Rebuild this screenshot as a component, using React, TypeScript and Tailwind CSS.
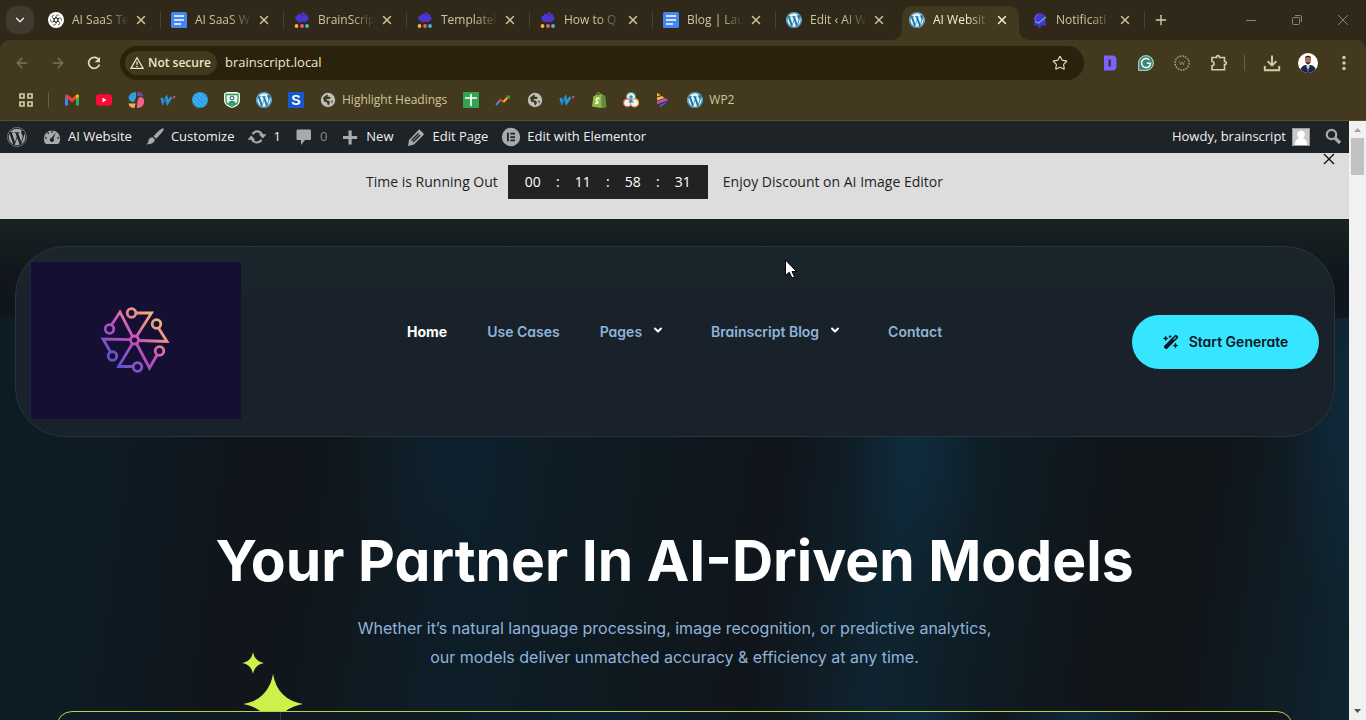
import type { ReactNode } from "react";
import { FaWordpress } from "react-icons/fa";
import { FaWandMagicSparkles } from "react-icons/fa6";
import { ArrowLeft, ArrowRight, ChevronDown, Plus, X, Star } from "lucide-react";

const OpenAi = () => (
  <svg viewBox="0 0 16 16" className="size-4">
    <circle cx="8" cy="8" r="8" fill="#fff" />
    <g fill="none" stroke="#333" strokeWidth=".8">
      {[0, 60, 120, 180, 240, 300].map((a) => (
        <path key={a} d="M8 5.800V4.200a1.800 1.800 0 0 1 3.200-.5M8 5.800l2 1.100v3" transform={`rotate(${a} 8 8)`} />
      ))}
    </g>
  </svg>
);

const Docs = () => (
  <svg viewBox="0 0 16 16" className="size-4">
    <rect width="16" height="16" rx="1.5" fill="#4285f4" />
    <path d="M3 4h10M3 8h10M3 12h7" stroke="#fff" strokeWidth="1.7" />
  </svg>
);

const Brain = () => (
  <svg viewBox="0 0 16 16" className="size-4">
    <path d="M1.5 7C.6 4.5 2.3 3.4 3.8 3.500 4 1.500 6 .8 7 2 8-.3 11-.3 11.200 2c2 .2 2.500 1.700 2.300 2.500 1.700.8 1.500 3.500-.5 4-1 2-3.500 1.700-4.500 1C6 11 3 10.500 3 8.500c-.8 0-1.300-.7-1.500-1.500z" fill="#4a35cf" />
    <path d="M7 2l1 1.500M11 2 9.500 3.500" stroke="#302818" strokeWidth=".8" />
    <circle cx="2.500" cy="14" r="1.900" fill="#f5b041" />
    <circle cx="8" cy="14" r="1.900" fill="#e8626e" />
    <circle cx="13" cy="14" r="1.900" fill="#4db4ea" />
  </svg>
);

const Wp = () => (
  <span className="flex size-4 rounded-full bg-[#1878a8]">
    <FaWordpress className="size-4 text-[#e4f0f6]" />
  </span>
);

const Bell = () => (
  <svg viewBox="0 0 16 16" className="size-4">
    <path d="M2.500 12V6.500a5.500 5.500 0 0 1 11 0V12l1 1.500h-13z" fill="#4f31d6" />
    <path d="M3.500 8.500a4 4 0 0 1 3-6" stroke="#7d69ee" fill="none" />
    <path d="M3 9.500 6.500 11 14 5" stroke="#35d1a4" fill="none" strokeWidth="1.200" />
    <circle cx="7.500" cy="14.500" r="1.500" fill="#4f31d6" />
  </svg>
);

type Tab = { title: string; icon: () => ReactNode; active?: boolean; bare?: boolean };
const tabs: Tab[] = [
  { title: "AI SaaS Te", icon: OpenAi },
  { title: "AI SaaS W", icon: Docs },
  { title: "BrainScrip", icon: Brain },
  { title: "Templatel", icon: Brain },
  { title: "How to Q", icon: Brain },
  { title: "Blog | Lau", icon: Docs },
  { title: "Edit ‹ AI W", icon: Wp, bare: true },
  { title: "AI Websit", icon: Wp, active: true },
  { title: "Notificati", icon: Bell },
];

function TabStrip() {
  return (
    <div className="flex h-10 items-end bg-[#302818]">
      <button aria-label="Search tabs" className="mr-1 mb-1.5 ml-1.5 flex size-7 shrink-0 items-center justify-center rounded-[10px] bg-[#423a2f] text-[#f0e8d8]">
        <ChevronDown className="size-3.5" strokeWidth={2.5} />
      </button>
      <div role="tablist" className="flex h-[34px] min-w-0">
        {tabs.map((t, i) => (
          <div key={i} className="relative flex w-[123px] min-w-0 px-[3px]">
            <div
              className={
                t.active
                  ? "flex w-full items-start rounded-t-[10px] bg-[#43391f] pt-1.5 pl-[7px] text-[#f3ecd6]"
                  : "flex w-full items-start pt-1.5 pl-[7px] text-[#cfc59c]"
              }
            >
              <span className="shrink-0">{t.icon()}</span>
              <span role="tab" aria-selected={!!t.active} className="ml-2 h-4 w-[62px] shrink-0 [mask-image:linear-gradient(to_right,black_55%,transparent_92%)] text-[12px] leading-4 whitespace-nowrap">
                {t.title}
              </span>
              <button aria-label={`Close ${t.title}`} className="flex h-4 shrink-0 items-center">
                <X className="size-3.5" strokeWidth={2.5} />
              </button>
            </div>
            {!t.active && !t.bare && <span className="absolute top-1.5 right-0 h-4 w-px bg-[#4a4335]" />}
            {t.active && (
              <>
                <svg viewBox="0 0 10 10" className="absolute bottom-0 -left-[7px] size-2.5"><path d="M10 0v10H0A10 10 0 0 0 10 0z" fill="#43391f" /></svg>
                <svg viewBox="0 0 10 10" className="absolute -right-[7px] bottom-0 size-2.5"><path d="M0 0v10h10A10 10 0 0 1 0 0z" fill="#43391f" /></svg>
              </>
            )}
          </div>
        ))}
      </div>
      <button aria-label="New tab" className="mb-3 ml-2 text-[#d8cfb0]">
        <Plus className="size-4" />
      </button>
      <div className="mb-3 ml-auto flex items-center gap-[30px] pr-[15px] text-[#8b846f]">
        <button aria-label="Minimize" className="flex size-4 items-center justify-center"><span className="h-px w-2.5 bg-current" /></button>
        <button aria-label="Restore" className="flex size-4 items-center justify-center">
          <svg viewBox="0 0 12 12" className="size-3" fill="none" stroke="currentColor"><rect x="1.500" y="3.500" width="7" height="7" rx="1" /><path d="M4 1.500h5A1.500 1.500 0 0 1 10.500 3v5" /></svg>
        </button>
        <button aria-label="Close window" className="flex size-4 items-center justify-center">
          <svg viewBox="0 0 12 12" className="size-3" stroke="currentColor"><path d="m1 1 10 10M11 1 1 11" /></svg>
        </button>
      </div>
    </div>
  );
}

function Toolbar() {
  return (
    <div className="flex h-[46px] items-center rounded-t-[10px] bg-[#43391f] pl-[14px]">
      <button aria-label="Back" className="text-[#807555]"><ArrowLeft className="size-4" /></button>
      <button aria-label="Forward" className="ml-5 text-[#807555]"><ArrowRight className="size-4" /></button>
      <button aria-label="Reload" className="ml-5 text-[#e2dabb]">
        <svg viewBox="0 0 16 16" className="size-4"><path d="M13 5.200A5.500 5.500 0 1 0 13.400 9.500" fill="none" stroke="currentColor" strokeWidth="1.700" /><path d="M14 2v5.300H8.700z" fill="currentColor" /></svg>
      </button>
      <div className="ml-[18px] flex h-[34px] min-w-0 flex-1 items-center rounded-full bg-[#2a220c] pr-4 pl-[5px]">
        <span className="flex h-6 shrink-0 items-center rounded-full bg-[#43391f] pr-1.5 pl-[5px] text-[12px] font-semibold text-[#efe7cd]">
          <svg viewBox="0 0 14 14" className="mr-1 size-3.5" fill="none" stroke="currentColor" strokeWidth="1.300"><path d="M7 1.800 13 12.300H1z" /><path d="M7 5.500v3.200M7 9.800v1.300" /></svg>
          Not secure
        </span>
        <input aria-label="Address" defaultValue="brainscript.local" className="ml-2 min-w-0 flex-1 bg-transparent text-[13px] text-[#efe7cd] outline-none" />
        <button aria-label="Bookmark this page" className="text-[#e2dabb]"><Star className="size-4" strokeWidth={1.700} /></button>
      </div>
      <div className="flex items-center pr-[14px] pl-[18px] text-[#d6cca4]">
        <svg viewBox="0 0 16 16" className="size-4"><path d="M2 .5h8q4.500 0 4.500 4.500v6q0 4.500-4.500 4.500H2zM6.500 4.500v7H9v-7z" fill="#7b61ff" fillRule="evenodd" /></svg>
        <svg viewBox="0 0 16 16" className="ml-5 size-4"><path d="M8 0a8 8 0 1 1 0 16H0V8a8 8 0 0 1 8-8z" fill="#3c8371" /><path d="M8 .7a7.300 7.300 0 1 1 0 14.600H.7V8A7.300 7.300 0 0 1 8 .7z" fill="none" stroke="#cfe0d8" strokeWidth=".9" /><path d="M11.300 5A4.500 4.500 0 1 0 12.500 8.300H8.800" stroke="#fff" strokeWidth="1.500" fill="none" /></svg>
        <svg viewBox="0 0 16 16" className="ml-5 size-4"><circle cx="8" cy="8" r="7" fill="none" stroke="#a9a596" strokeWidth="1.500" strokeDasharray="1.600 1.150" /><path d="M10.500 1.500A7 7 0 0 1 15 8" stroke="#5f9134" strokeWidth="1.500" strokeDasharray="1.600 1.150" fill="none" /><path d="m5.500 6 1.200 4L8 7l1.300 3 1.200-4" stroke="#7f7a68" fill="none" /></svg>
        <svg viewBox="0 0 18 18" className="ml-5 size-[18px]" fill="none" stroke="currentColor" strokeWidth="1.600"><path d="M2 3.500h4.500C6 1 10 1 9.500 3.500h5v4c2.500-.5 2.500 3.500 0 3v5.200H2v-4C4.800 11.700 4.800 7.500 2 7.500z" /></svg>
        <span className="ml-4 h-4 w-px bg-[#6a6039]" />
        <svg viewBox="0 0 18 18" className="ml-[18px] size-[18px]" fill="none" stroke="currentColor" strokeWidth="1.900"><path d="M9 1.500v10M4.700 7.300 9 11.500l4.300-4.200M1.800 12v4.200h14.400V12" /></svg>
        <svg viewBox="0 0 20 20" className="ml-[17px] size-5"><defs><clipPath id="face"><circle cx="10" cy="10" r="10" /></clipPath></defs><g clipPath="url(#face)"><path d="M0 0h20v20H0z" fill="#fff" /><path d="M2 20c0-6 3-7.500 5.500-8h5c3 .5 5.500 2 5.500 8z" fill="#1b2746" /><path d="M8.500 10h3v4L10 17l-1.500-3z" fill="#e9e3e0" /><ellipse cx="10" cy="7" rx="3" ry="4.300" fill="#a9705a" /><path d="M7 6C6 1.500 14 1.500 13 6c-.5-1.500-1.500-2-3-2S7.500 4.500 7 6zM7.700 9.500h4.600L10 11.500z" fill="#251a1b" /><path d="m10 12.500.8 6H9.200z" fill="#3d75c4" /></g></svg>
        <svg viewBox="0 0 16 16" className="ml-[18px] size-4" fill="currentColor"><circle cx="8" cy="2.500" r="1.700" /><circle cx="8" cy="8" r="1.700" /><circle cx="8" cy="13.500" r="1.700" /></svg>
      </div>
    </div>
  );
}

const Globe = () => (
  <svg viewBox="0 0 16 16" className="size-4"><circle cx="8" cy="8" r="7.200" fill="#bfc0bd" /><path d="M3 5.500c2-1 2.500-2.500 5-3l-.5 2 3 .5-.5 2H7l-.5 1.500H9l1 2.500-2 3-1-3.500-3-1zM11 8.500l2 .5-1 2.500z" fill="#43391f" /></svg>
);
const Wave = () => (
  <svg viewBox="0 0 16 16" className="size-4" fill="none"><path d="m1.500 6 1.500 5L6.500 5.500l1 5.500L11.500 5" stroke="#2996d6" strokeWidth="2.400" /><path d="m3.500 12 2-5" stroke="#175f9c" strokeWidth="1.500" /><path d="M13 4h2.500L14 7.500z" fill="#e6457f" /></svg>
);

const bookmarks: { name: string; label?: string; icon: ReactNode }[] = [
  { name: "Gmail", icon: <svg viewBox="0 0 16 16" className="size-4"><path d="M1 4v9.500h3V7z" fill="#4285f4" /><path d="M15 4v9.500h-3V7z" fill="#34a853" /><path d="M1 4.500C1 2 3 2 4 3l4 3 4-3v4l-4 3.500-4-3.500z" fill="#ea4335" /><path d="M12 3c1.500-1 3-.5 3 1.500L12 7z" fill="#fbbc04" /></svg> },
  { name: "YouTube", icon: <svg viewBox="0 0 16 16" className="size-4"><rect y="2.300" width="16" height="11.500" rx="2.800" fill="#fb0a36" /><path d="m6.500 5.700 4 2.400-4 2.400z" fill="#fff" /></svg> },
  { name: "Design", icon: <svg viewBox="0 0 16 16" className="size-4"><path d="M8 0v5.500L6 10C-1.500 10.500-1.500.5 8 0z" fill="#2f9fdd" /><path d="M9 0c4-.5 6 2 6.500 4.500L9 4z" fill="#6a4b9c" /><path d="M12 5c3.500 0 5 3 4 6s-3 5-7 5c0-5 0-9 3-11z" fill="#ef6488" /><path d="M.5 11.500H7.500L6.500 16C3 16 1 14.500.5 11.500z" fill="#f4ad55" /></svg> },
  { name: "Wave", icon: <Wave /> },
  { name: "Sphere", icon: <svg viewBox="0 0 16 16" className="size-4"><circle cx="8" cy="8" r="8" fill="#2aa1e4" /><path d="m2 5 9 9M4 3l10 9M7 1.500l8 7M1.500 8l6 6.500" stroke="#72c4f0" strokeWidth=".7" /></svg> },
  { name: "Shield", icon: <svg viewBox="0 0 16 16" className="size-4"><path d="M0 1.500 3 0h10l3 1.500v7c0 4-4 6.500-8 7.500-4-1-8-3.500-8-7.500z" fill="#eef4ee" /><path d="M2 2.500h12v6c0 3-3 4.700-6 5.700-3-1-6-2.700-6-5.700z" fill="none" stroke="#2a9d55" strokeWidth="1.300" /><circle cx="8" cy="6" r="1.900" fill="none" stroke="#225a70" /><path d="M3.500 12 6 9h4l2.500 3L8 14.500z" fill="#2a9d75" /></svg> },
  { name: "WordPress", icon: <Wp /> },
  { name: "S", icon: <span className="flex size-4 items-center justify-center bg-[#1758d0] font-['Liberation_Sans',sans-serif] text-[14px] leading-4 font-bold text-white">S</span> },
  { name: "Highlight", label: "Highlight Headings", icon: <Globe /> },
  { name: "Sheets", icon: <svg viewBox="0 0 16 16" className="size-4"><rect width="16" height="16" rx="1.300" fill="#35a354" /><path d="M8 2v12M2 6h12" stroke="#fff" strokeWidth="1.700" /></svg> },
  { name: "Analytics", icon: <svg viewBox="0 0 16 16" className="size-4" fill="none" strokeWidth="2"><path d="m1 13 3.500-4" stroke="#4285f4" /><path d="M4 9.500 5.500 8 9 10" stroke="#ea4335" /><path d="m8.500 10 4-4.500" stroke="#fbae17" /><path d="M11 3.500h4V7z" fill="#34a853" /></svg> },
  { name: "Globe", icon: <Globe /> },
  { name: "Wave two", icon: <Wave /> },
  { name: "Shopify", icon: <svg viewBox="0 0 16 16" className="size-4"><path d="m2.500 4 8-2 3.500 2 1.300 11-5.300 1-9-1.500z" fill="#8dbc42" /><path d="m10.500 2 3.500 2 1.300 11-5 1z" fill="#5e8e3e" /><path d="M5 5c0-5 4-6 4.500-2" stroke="#8dbc42" fill="none" /><path d="M8.500 6.700C5 5.500 4.500 8 6 9s1.500 3-2 2" stroke="#fff" strokeWidth="1.500" fill="none" /></svg> },
  { name: "Community", icon: <svg viewBox="0 0 16 16" className="size-4" fill="#f5f3f0" strokeWidth="1.300"><circle cx="8" cy="5" r="4.500" stroke="#48a77d" /><circle cx="4.500" cy="10.800" r="4" stroke="#df5659" /><circle cx="11.500" cy="10.800" r="4" stroke="#e6ab4c" /><circle cx="8" cy="5" r="1.800" fill="#2c8dce" /><path d="m8 6.500 2.800 4H5.200z" fill="#2c8dce" /></svg> },
  { name: "Stripes", icon: <svg viewBox="0 0 16 16" className="size-4"><path d="M2 1v3.500L6 3zM2 5.500v3L9.500 6 7 4z" fill="#f5b93f" /><path d="M2 9.500v2.800L13 8l-2.500-1.700z" fill="#c053cf" /><path d="M5 13v2.500L13.500 9z" fill="#4d63e6" /></svg> },
  { name: "WP2", label: "WP2", icon: <Wp /> },
];

function Bookmarks() {
  return (
    <nav aria-label="Bookmarks" className="flex h-[35px] items-center gap-4 overflow-hidden border-b border-[#5a4e2c] bg-[#43391f] pb-[7px] pl-[18px] text-[12px] text-[#cfc59c]">
      <button aria-label="Apps" className="shrink-0">
        <svg viewBox="0 0 16 16" className="size-4" fill="none" stroke="#d6cca4" strokeWidth="1.700"><path d="M2 2h4v4H2zM10 2h4v4h-4zM2 10h4v4H2zM10 10h4v4h-4z" /></svg>
      </button>
      <span className="-mr-px -ml-0.5 h-4 w-px bg-[#6a6039]" />
      {bookmarks.map((b) => (
        <a key={b.name} href="#" aria-label={b.name} className="flex shrink-0 items-center gap-1.5">
          {b.icon}
          {b.label && <span className="leading-4">{b.label}</span>}
        </a>
      ))}
    </nav>
  );
}

const Dash = ({ children }: { children: ReactNode }) => (
  <svg viewBox="0 0 20 20" className="size-5 text-[#a7aaad]" fill="currentColor">{children}</svg>
);

function AdminBar() {
  const items: { label: string; icon: ReactNode; dim?: boolean }[] = [
    { label: "AI Website", icon: <Dash><path fillRule="evenodd" d="M3.800 17h12.400A8.200 8.200 0 1 0 3.800 17zM9.300 3.800h1.400v2H9.300zM5 6l1-1 1.300 1.300-1 1zM2.800 10.200h2v1.400h-2zM15.200 10.200h2v1.400h-2zM13.800 5.500l-2.300 6.300a2 2 0 1 1-2-.8z" /></Dash> },
    { label: "Customize", icon: <Dash><path d="M18.500 1.500c1 1-1.500 4.500-7.500 10.200l-2.500-2.400C14 3.500 17.500.5 18.500 1.500zM7.500 10.200l2.400 2.400c-.5 3.500-4 5-8.900 4.900 2-1 2-2.300 2.500-4.300.6-2 2-3 4-3z" /></Dash> },
    { label: "1", icon: <Dash><path d="M10 3.300c2.700 0 5 1.600 6 3.900h3.500l-3.700 4.300-4-4.300h1.800A4.200 4.200 0 0 0 6.500 8L4.700 6.200A6.700 6.700 0 0 1 10 3.300zM4.200 8.500l4 4.300H6.400a4.200 4.200 0 0 0 7.100-.8l1.800 1.800A6.700 6.700 0 0 1 4 12.800H.5z" /></Dash> },
    { label: "0", dim: true, icon: <Dash><path d="M4 2.500h11.500c1 0 1.500.5 1.500 1.500v7.500c0 1-.5 1.500-1.500 1.500H11l-4 5v-5H4c-1 0-1.500-.5-1.500-1.500V4c0-1 .5-1.500 1.500-1.500z" /></Dash> },
    { label: "New", icon: <Dash><path d="M8.500 3.500h3.200V9h5.500v3h-5.500v5.500H8.500V12H3V9h5.500z" /></Dash> },
    { label: "Edit Page", icon: <Dash><path fillRule="evenodd" d="m13.500 2.500 4 4c.5.500.5 1 0 1.500L8 17.500 2 19l1-6L12.500 3q.5-.8 1-.5zM5 13l7-7 1 1-7 7zM7.500 15.500l7-7-1-1-7 7z" /></Dash> },
    { label: "Edit with Elementor", icon: <Dash><path fillRule="evenodd" d="M10 .8a9.200 9.200 0 1 0 0 18.400A9.200 9.200 0 0 0 10 .8zM6 5.800h1.800v8.500H6zM9.300 5.800H14v1.700H9.300zM9.300 9.200H14v1.700H9.300zM9.300 12.600H14v1.700H9.300z" /></Dash> },
  ];
  return (
    <div className="flex h-8 shrink-0 items-center bg-[#1d2327] pl-[7px] text-[13px] text-[#f0f0f1]">
      <a href="#" aria-label="About WordPress" className="shrink-0"><FaWordpress className="size-5 text-[#a7aaad]" /></a>
      <div className="ml-[15px] flex items-center gap-[13px]">
        {items.map((it) => (
          <a key={it.label} href="#" className={it.dim ? "flex items-center gap-1.5 whitespace-nowrap text-[#85888b]" : "flex items-center gap-1.5 whitespace-nowrap"}>
            {it.icon}
            {it.label}
          </a>
        ))}
      </div>
      <a href="#" className="ml-auto flex items-center gap-1.5 whitespace-nowrap">
        Howdy, brainscript
        <svg viewBox="0 0 18 18" className="size-[18px]"><path d="M0 0h18v18H0z" fill="#c9cacb" /><circle cx="9" cy="6.500" r="3.800" fill="#fff" /><path d="M3 17c0-6 3-7 6-7s6 1 6 7z" fill="#fff" /><path d="M.5.5h17v17H.5z" fill="none" stroke="#97999b" /></svg>
      </a>
      <button aria-label="Search" className="mr-1.5 ml-[13px]">
        <svg viewBox="0 0 20 20" className="size-5" fill="none" stroke="#a7aaad"><circle cx="8.500" cy="7.500" r="4.700" strokeWidth="2.200" /><path d="m12 11 5 5" strokeWidth="3.400" /></svg>
      </button>
    </div>
  );
}

function Countdown() {
  return (
    <section className="relative flex h-[66px] shrink-0 items-start justify-center bg-[#dddddd] pt-3 pr-10 text-[14px] text-[#1f1f1f]">
      <div className="flex h-[34px] items-center">
        <p className="pb-0.5 whitespace-nowrap">Time is Running Out</p>
        <div className="mr-[15px] ml-2.5 grid h-[34px] w-[200px] grid-cols-[50px_0_50px_0_50px_0_50px] items-center bg-[#222222] pb-0.5 text-center text-white">
          <span>00</span><span className="flex justify-center">:</span><span>11</span><span className="flex justify-center">:</span><span>58</span><span className="flex justify-center">:</span><span>31</span>
        </div>
        <p className="pb-0.5 whitespace-nowrap">Enjoy Discount on AI Image Editor</p>
      </div>
      <button aria-label="Dismiss" className="absolute top-0 right-3.5 text-[#111]">
        <svg viewBox="0 0 12 12" className="size-3" stroke="currentColor" strokeWidth="1.400"><path d="m1 1 10 10M11 1 1 11" /></svg>
      </button>
    </section>
  );
}

function Logo() {
  return (
    <svg viewBox="0 0 90 90" className="mr-1 size-[90px]" fill="none" stroke="url(#spokes)" strokeWidth="2.800">
      <defs>
        <linearGradient id="spokes" gradientUnits="userSpaceOnUse" x1="70" y1="15" x2="20" y2="70">
          <stop offset="0" stopColor="#f2c66c" /><stop offset=".3" stopColor="#e88591" /><stop offset=".5" stopColor="#c84fc0" /><stop offset=".75" stopColor="#8e50c8" /><stop offset="1" stopColor="#3c58d0" />
        </linearGradient>
      </defs>
      <circle cx="45.500" cy="44" r="4" />
      <circle cx="42.500" cy="17" r="4.300" /><path d="M47 17h15.500L47.500 40.500" />
      <circle cx="67.500" cy="28" r="4.300" /><path d="m69.500 32 8.500 13.500L49.500 44.500" />
      <circle cx="70.500" cy="55" r="4.300" /><path d="m68 59-7.500 13L47.500 47.500" />
      <circle cx="48.500" cy="71" r="4.300" /><path d="M44 70.500H29.500L43.500 47.500" />
      <circle cx="23.500" cy="60" r="4.300" /><path d="m21.500 56-7.500-13 27.500.7" />
      <circle cx="20.500" cy="33" r="4.300" /><path d="m22.500 29 8.500-13 12.500 24.500" />
    </svg>
  );
}

const links = [
  { label: "Home", active: true },
  { label: "Use Cases" },
  { label: "Pages", menu: true },
  { label: "Brainscript Blog", menu: true },
  { label: "Contact" },
];

function Header() {
  return (
    <header className="relative mr-[14px] ml-[15px] flex h-[191px] shrink-0 items-center rounded-[50px] border border-[#26343c] bg-linear-to-b from-[#1b262c] via-[#19222a] via-30% to-[#19222a] pr-[15px] pl-[14px]">
      <a href="#" aria-label="BrainScript" className="mb-[3px] flex h-[158px] w-[211px] shrink-0 items-center justify-center border-t border-l border-[#24204d] bg-[#151033]">
        <Logo />
      </a>
      <nav aria-label="Main" className="mb-5 ml-[166px] flex gap-10 text-[14px] leading-6 font-semibold text-[#8fb3d9]">
        {links.map((l) => (
          <a key={l.label} href="#" className={l.active ? "flex items-center font-bold whitespace-nowrap text-white" : "flex items-center whitespace-nowrap"}>
            {l.label}
            {l.menu && <ChevronDown className="mr-[7px] mb-1 ml-2.5 size-3 text-white" strokeWidth={4} />}
          </a>
        ))}
      </nav>
      <button className="ml-auto flex h-[54px] w-[187px] items-center justify-center gap-2.5 rounded-full bg-[#36e5ff] text-[14px] font-semibold whitespace-nowrap text-[#10161c]">
        <FaWandMagicSparkles className="size-4" />
        Start Generate
      </button>
      <svg viewBox="0 0 14 20" className="absolute top-3 left-[768px] h-5 w-3.5"><path d="M1.500 1v15.500l3.700-3.300L8 19l2.500-1.200L8 12.500h4.500z" fill="#fff" stroke="#000" /></svg>
    </header>
  );
}

function Sparkle({ className }: { className: string }) {
  return <svg viewBox="0 0 60 60" className={className}><path d="M30 0C33 17 43 27 60 30 43 33 33 43 30 60 27 43 17 33 0 30 17 27 27 17 30 0z" fill="#cdf04b" /></svg>;
}

function Hero() {
  return (
    <main className="relative flex flex-1 flex-col overflow-hidden bg-[#10161c] pt-[27px] font-['Inter',sans-serif] [font-feature-settings:'cv11']">
      <div className="absolute inset-x-0 top-[99px] bottom-0 bg-[linear-gradient(98deg,#0d1b22_0%,#0d1b24_9%,#10151b_19%,#10171c_25%,#0d1e29_36%,#0e1a21_45%,#10151b_57%,#0e2430_66%,#0e1c24_73%,#10151a_81%,#10151a_88%,#0e2430_100%)]" />
      <div className="absolute inset-x-0 top-[99px] bottom-0 bg-[radial-gradient(70px_150px_at_915px_130px,#11375266,transparent),radial-gradient(70px_220px_at_1349px_90px,#0f3a5566,transparent),radial-gradient(90px_150px_at_440px_130px,#0f2a4055,transparent)]" />
      <div className="absolute inset-x-0 top-0 h-[99px] bg-[linear-gradient(to_bottom,#1a2225,#10161b_60%)]" />
      <Header />
      <div className="relative flex flex-col items-center pt-[90px] text-center">
        <h1 className="text-[57px] leading-[68px] font-bold whitespace-nowrap text-white">Your Partner In AI-Driven Models</h1>
        <p className="mt-[19px] text-[16px] leading-[29px] text-[#8fb3d9] [font-feature-settings:normal]">
          Whether it’s natural language processing, image recognition, or predictive analytics,
          <br />
          our models deliver unmatched accuracy &amp; efficiency at any time.
        </p>
      </div>
      <Sparkle className="absolute top-[433px] left-[242px] size-[22px]" />
      <Sparkle className="absolute top-[455px] left-[243px] size-[60px]" />
      <div className="relative mx-14 mt-[39px] h-24 shrink-0 rounded-t-[16px] border border-[#b9cf46] bg-[linear-gradient(90deg,#0d1b24,#0f1920_25%,#0d2030_45%,#10161c_58%,#0f2c40_70%,#10161c_76%,#0f2a3c_83%,#10161c_90%,#10161c)]">
        <span className="ml-[223px] block h-full w-px bg-[#2a3740]" />
      </div>
    </main>
  );
}

export default function App() {
  return (
    <div className="flex h-screen flex-col overflow-hidden font-['Open_Sans','Noto_Sans',sans-serif]">
      <div className="shrink-0 bg-[#302818]">
        <TabStrip />
        <Toolbar />
        <Bookmarks />
      </div>
      <div className="flex min-h-0 flex-1">
        <div className="flex min-w-0 flex-1 flex-col">
          <AdminBar />
          <Countdown />
          <Hero />
        </div>
        <div aria-hidden="true" className="flex w-[17px] shrink-0 flex-col items-center bg-[#f1f1f1]">
          <svg viewBox="0 0 17 17" className="size-[17px]"><path d="m5 11 3.500-4 3.500 4z" fill="#a3a3a3" /></svg>
          <span className="h-[37px] w-[13px] bg-[#c1c1c1]" />
          <svg viewBox="0 0 17 17" className="mt-auto size-[17px]"><path d="m5 6 3.500 4L12 6z" fill="#505050" /></svg>
        </div>
      </div>
    </div>
  );
}
